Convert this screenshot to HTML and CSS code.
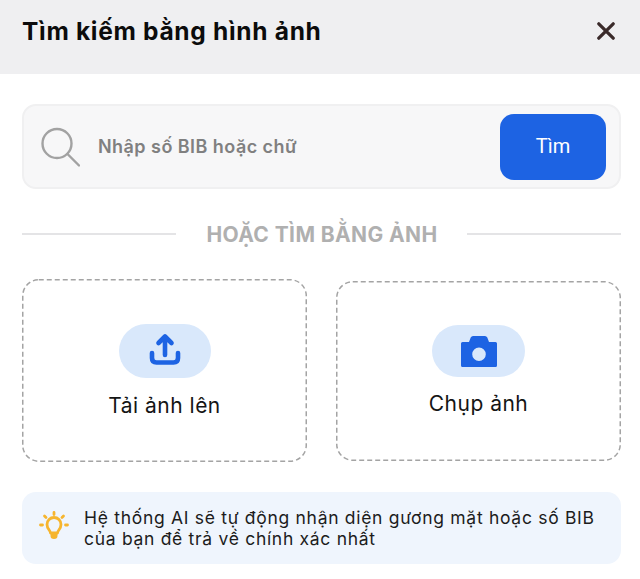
FILE: index.html
```html
<!DOCTYPE html>
<html lang="vi">
<head>
  <meta charset="UTF-8" />
  <meta name="viewport" content="width=device-width, initial-scale=1" />
  <title>Tìm kiếm bằng hình ảnh</title>
  <link rel="stylesheet" href="styles.css">
</head>
<body>
  <header class="topbar">
    <h1>Tìm kiếm bằng hình ảnh</h1>
    <svg class="close-icon" viewBox="0 0 20 20" aria-label="Đóng">
      <path d="M2 2 L18 18 M18 2 L2 18" />
    </svg>
  </header>
  <main class="content">
    <div class="search-box">
      <svg class="search-icon" viewBox="0 0 40 40">
        <circle cx="17" cy="16.5" r="14.5" />
        <path d="M27.5 27 L39 38.5" />
      </svg>
      <span class="placeholder">Nhập số BIB hoặc chữ</span>
      <button class="search-btn">Tìm</button>
    </div>
    <div class="divider">
      <span class="line"></span>
      <span class="divider-text">HOẶC TÌM BẰNG ẢNH</span>
      <span class="line"></span>
    </div>
    <div class="cards">
      <div class="card card-upload">
        <svg class="card-border"><rect /></svg>
        <div class="pill pill-upload">
          <svg class="upload-icon" viewBox="0 0 32 32">
            <path class="upload-arrow" d="M16 22 V4 M9.500 10 L16 3.500 L22.500 10" />
            <path class="upload-tray" d="M3 20 V25 Q3 29.500 7.500 29.500 H24.500 Q29 29.500 29 25 V20" />
          </svg>
        </div>
        <div class="card-label">Tải ảnh lên</div>
      </div>
      <div class="card card-photo">
        <svg class="card-border"><rect /></svg>
        <div class="pill pill-photo">
          <svg class="camera-icon" viewBox="0 0 36 32">
            <path class="camera-body" fill-rule="evenodd" d="M12 1 H24 Q25.5 1 26.3 2.5 L28 7 H34.5 Q36 7 36 8.5 V30.5 Q36 32 34.5 32 H1.5 Q0 32 0 30.5 V8.5 Q0 7 1.5 7 H8 L9.7 2.5 Q10.5 1 12 1 Z M18 12.5 A6.8 6.8 0 1 0 18 26.1 A6.8 6.8 0 1 0 18 12.5 Z" />
          </svg>
        </div>
        <div class="card-label">Chụp ảnh</div>
      </div>
    </div>
    <div class="tip">
      <svg class="tip-icon" viewBox="0 0 30 30">
        <path class="tip-rays" d="M15 1.5 V3.5 M5.5 5 L7 6.5 M24.500 5 L23 6.500 M1.500 14 H3.500 M26.500 14 H28.500" />
        <path class="tip-bulb" d="M11.500 22 C11.500 19.500 8 18 8 13.500 A7 7 0 0 1 22 13.500 C22 18 18.500 19.500 18.500 22 Z" />
        <path class="tip-base" d="M11.500 22.500 H18.500 V25 Q18.500 28 15 28 Q11.500 28 11.500 25 Z" />
      </svg>
      <p>Hệ thống AI sẽ tự động nhận diện gương mặt hoặc số BIB của bạn để trả về chính xác nhất</p>
    </div>
  </main>
</body>
</html>
```

FILE: styles.css
```css
* {
  margin: 0;
  padding: 0;
  box-sizing: border-box;
}
html, body {
  width: 100%;
  height: 100%;
  background: #fff;
  color: #111;
  font-family: Inter, "Open Sans", sans-serif;
  overflow: hidden;
}
.topbar {
  height: 74px;
  background: #efeff1;
  padding: 0 25px 0 22px;
  display: flex;
  align-items: center;
  justify-content: space-between;
}
.topbar h1 {
  font-size: 24.5px;
  font-weight: 700;
  letter-spacing: 0.7px;
  color: #0c0c0c;
  position: relative;
  top: -6px;
}
.close-icon {
  width: 18px;
  height: 18px;
  position: relative;
  top: -6px;
  fill: none;
  stroke: #3a2a2a;
  stroke-width: 3.6;
  stroke-linecap: round;
}
.content {
  padding: 30px 19px 0 22px;
}
.search-box {
  height: 85px;
  background: #f7f7f8;
  border: 2px solid #f0f0f1;
  border-radius: 14px;
  padding: 0 13px 0 16px;
  display: flex;
  align-items: center;
}
.search-icon {
  width: 40px;
  height: 40px;
  fill: none;
  stroke: #a2a2a2;
  stroke-width: 2.4;
  stroke-linecap: round;
  flex-shrink: 0;
}
.placeholder {
  margin-left: 18px;
  font-size: 18px;
  font-weight: 600;
  letter-spacing: 0.45px;
  color: #808080;
  flex: 1;
}
.search-btn {
  width: 106px;
  height: 66px;
  margin-top: 1px;
  background: #1d63e3;
  color: #fff;
  border: none;
  border-radius: 14px;
  font-family: Roboto, sans-serif;
  font-size: 20px;
  font-weight: 400;
  padding-bottom: 3px;
}
.divider {
  margin-top: 31px;
  height: 28px;
  display: flex;
  align-items: center;
}
.line {
  height: 2px;
  background: #e4e4e6;
  flex: 1;
}
.divider-text {
  margin: 0 29px 0 30px;
  font-size: 21px;
  font-weight: 700;
  letter-spacing: 0.4px;
  color: #b0b0b0;
  white-space: nowrap;
}
.cards {
  margin-top: 31px;
  display: grid;
  grid-template-columns: 285px 285px;
  justify-content: space-between;
  align-items: center;
  height: 183px;
}
.card {
  position: relative;
  display: flex;
  flex-direction: column;
  align-items: center;
}
.card-border {
  position: absolute;
  top: 0;
  left: 0;
  width: 100%;
  height: 100%;
}
.card-border rect {
  x: 0.75px;
  y: 0.75px;
  width: calc(100% - 1.5px);
  height: calc(100% - 1.5px);
  rx: 16px;
  fill: none;
  stroke: #a4a4a4;
  stroke-width: 1.5;
  stroke-dasharray: 5 3;
}
.card-upload {
  height: 183px;
  padding-top: 45px;
}
.card-photo {
  height: 180px;
  padding-top: 44px;
}
.pill {
  width: 92px;
  background: #d9e8fb;
  border-radius: 27px;
  display: flex;
  align-items: center;
  justify-content: center;
}
.pill-upload {
  height: 54px;
}
.pill-photo {
  width: 93px;
  height: 52px;
}
.upload-icon {
  width: 32px;
  height: 32px;
  margin-bottom: 5px;
}
.upload-arrow {
  fill: none;
  stroke: #1d63e3;
  stroke-width: 4.6;
  stroke-linecap: round;
  stroke-linejoin: round;
}
.upload-tray {
  fill: none;
  stroke: #1d63e3;
  stroke-width: 4.6;
  stroke-linecap: round;
}
.camera-icon {
  width: 36px;
  height: 32px;
}
.camera-body {
  fill: #1d63e3;
}
.card-label {
  margin-top: 14px;
  font-size: 21px;
  letter-spacing: 0.5px;
  line-height: 26px;
  color: #151515;
}
.card-upload .card-label {
  margin-top: 15px;
}
.tip {
  margin-top: 30px;
  height: 72px;
  background: #eff5fd;
  border-radius: 14px;
  padding: 0 24px 0 17px;
  display: flex;
  align-items: center;
  gap: 15px;
}
.tip-icon {
  width: 30px;
  height: 30px;
  flex-shrink: 0;
  margin-top: -4px;
  fill: none;
  stroke: #f6b52e;
  stroke-width: 2.8;
  stroke-linecap: round;
  stroke-linejoin: round;
}
.tip-base {
  fill: #f6b52e;
  stroke: none;
}
.tip p {
  font-size: 17.5px;
  letter-spacing: 0.7px;
  line-height: 21px;
  color: #1c1c1c;
}
```
